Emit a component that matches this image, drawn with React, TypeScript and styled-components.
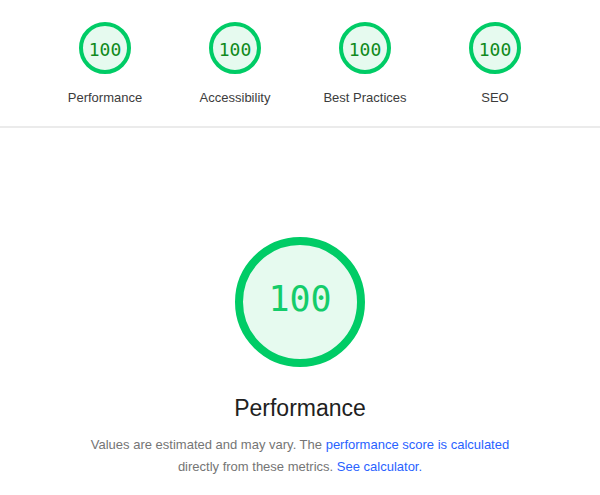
import styled, { createGlobalStyle } from "styled-components";

const GlobalStyle = createGlobalStyle`
  body {
    margin: 0;
    background: #fff;
    font-family: "Liberation Sans", Arial, sans-serif;
  }
`;

const categories = ["Performance", "Accessibility", "Best Practices", "SEO"];

function Gauge({ size, stroke }: { size: number; stroke: number }) {
  const r = (size - stroke) / 2;
  return (
    <svg width={size} height={size} viewBox={`0 0 ${size} ${size}`}>
      <circle
        cx={size / 2}
        cy={size / 2}
        r={r}
        fill="#e6faef"
        stroke="#00cc66"
        strokeWidth={stroke}
      />
    </svg>
  );
}

export default function App() {
  return (
    <>
      <GlobalStyle />
      <Summary>
        {categories.map((c) => (
          <SummaryItem key={c}>
            <GaugeWrap $size={52}>
              <Gauge size={52} stroke={4} />
              <Score $size={18} $color="#118a1d" $shift={1}>
                100
              </Score>
            </GaugeWrap>
            <Label>{c}</Label>
          </SummaryItem>
        ))}
      </Summary>
      <Divider />
      <Category>
        <GaugeWrap $size={130}>
          <Gauge size={130} stroke={8} />
          <Score $size={35} $color="#14cc6a" $shift={-3}>
            100
          </Score>
        </GaugeWrap>
        <Title>Performance</Title>
        <Description>
          Values are estimated and may vary. The{" "}
          <a href="#">performance score is calculated</a>
          <br />
          directly from these metrics. <a href="#">See calculator.</a>
        </Description>
      </Category>
    </>
  );
}

const Summary = styled.div`
  display: flex;
  justify-content: center;
  padding: 22px 0 19px;
`;

const SummaryItem = styled.div`
  width: 130px;
  display: flex;
  flex-direction: column;
  align-items: center;
`;

const GaugeWrap = styled.div<{ $size: number }>`
  position: relative;
  width: ${(p) => p.$size}px;
  height: ${(p) => p.$size}px;
  svg {
    display: block;
  }
`;

const Score = styled.div<{ $size: number; $color: string; $shift: number }>`
  position: absolute;
  inset: 0;
  display: flex;
  align-items: center;
  justify-content: center;
  padding-top: ${(p) => Math.max(p.$shift, 0) * 2}px;
  padding-bottom: ${(p) => Math.max(-p.$shift, 0) * 2}px;
  font-family: "DejaVu Sans Mono", monospace;
  font-size: ${(p) => p.$size}px;
  color: ${(p) => p.$color};
`;

const Label = styled.div`
  margin-top: 15px;
  font-size: 13px;
  line-height: 18px;
  color: #3c3c3c;
`;

const Divider = styled.hr`
  margin: 0;
  border: 0;
  height: 2px;
  background: #ebebeb;
`;

const Category = styled.div`
  display: flex;
  flex-direction: column;
  align-items: center;
  padding-top: 109px;
`;

const Title = styled.div`
  margin-top: 26px;
  font-size: 23px;
  line-height: 30px;
  color: #212121;
`;

const Description = styled.p`
  margin: 11px 0 0;
  font-size: 13px;
  line-height: 22px;
  color: #757575;
  text-align: center;
  a {
    color: #2962ff;
    text-decoration: none;
  }
`;
